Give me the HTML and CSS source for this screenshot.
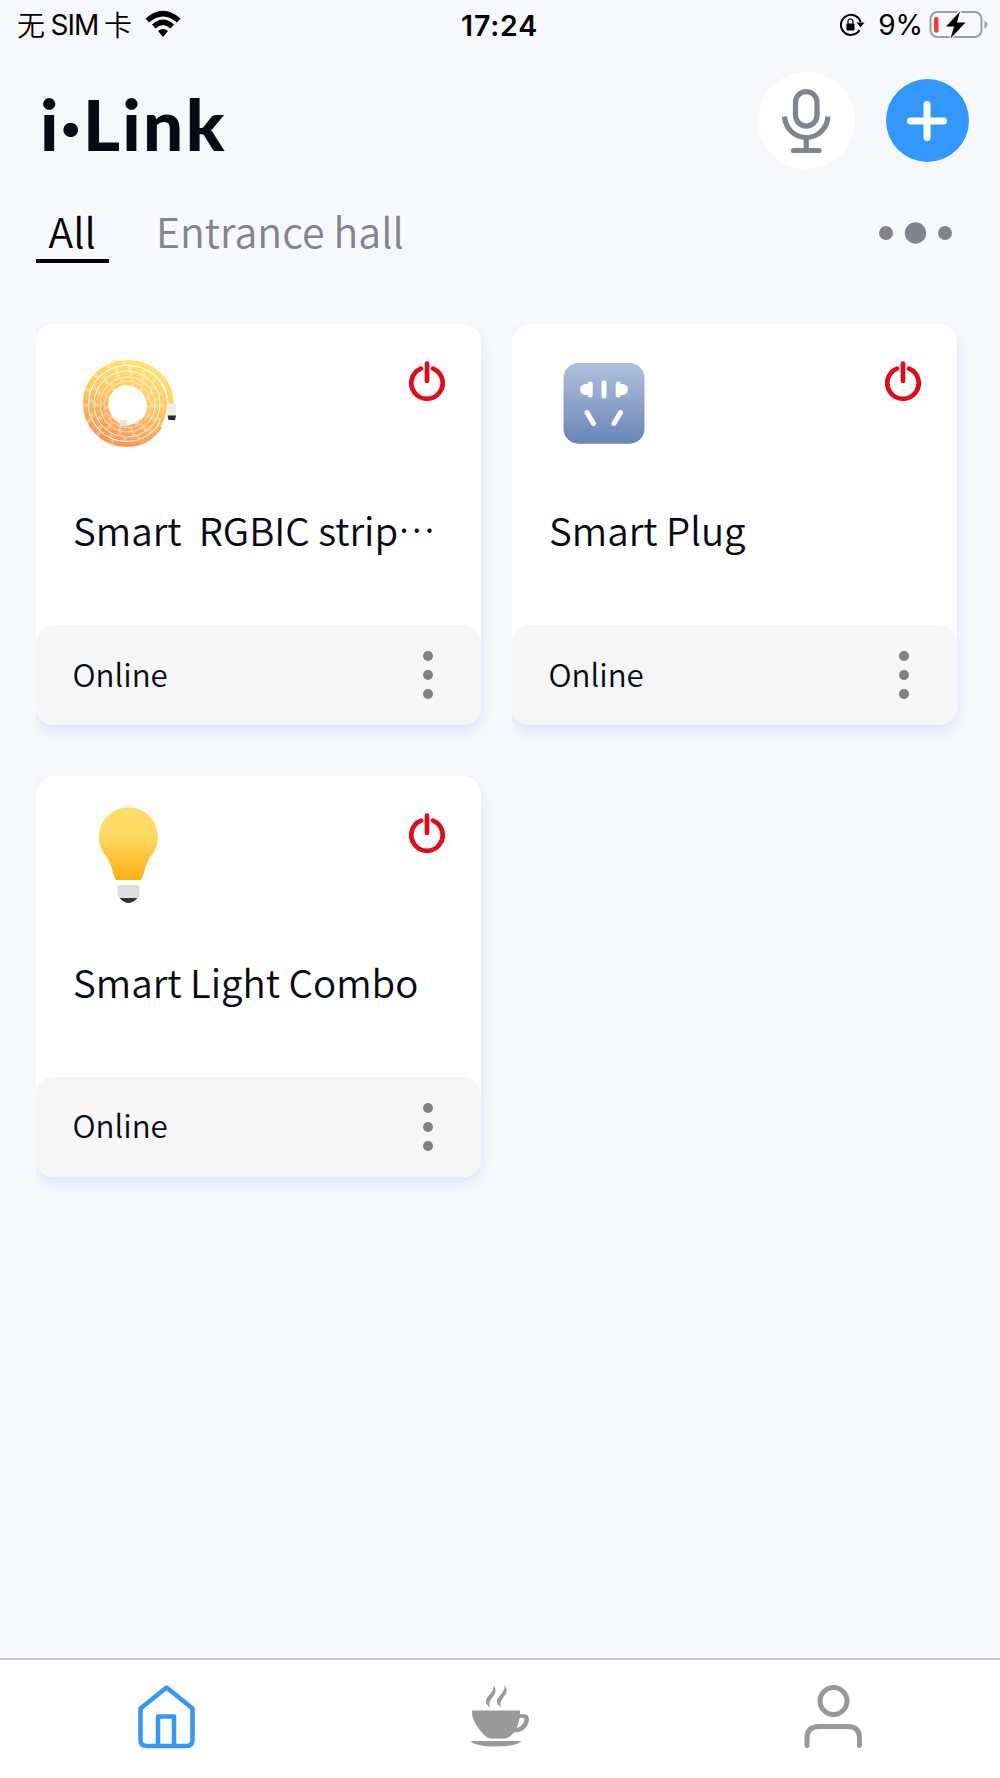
FILE: index.html
```
<!DOCTYPE html>
<html lang="en">
<head>
<meta charset="UTF-8">
<meta name="viewport" content="width=device-width, initial-scale=1.0">
<title>i·Link</title>
<link rel="stylesheet" href="styles.css">
</head>
<body>
  <div class="status-bar">
    <div class="status-left">
      <span class="carrier"><span class="han">无</span><span class="sim">SIM</span><span class="han">卡</span></span>
      <svg class="wifi" width="36" height="28" viewBox="0 0 35 28">
        <path d="M0 8.500Q17.500 -7 35 8.500L31.500 12.500Q17.500 .500 3.500 12.500Z"/>
        <path d="M6.500 14.500Q17.500 4.500 28.500 14.500L25 18.500Q17.500 11.500 10 18.500Z"/>
        <path d="M12.500 21Q17.500 17 22.500 21L17.500 27Z"/>
      </svg>
    </div>
    <div class="time">17:24</div>
    <div class="status-right">
      <svg width="26" height="26" viewBox="0 0 26 26">
        <path d="M20.500 18A10 10 0 1 1 21.500 10" fill="none" stroke="#000" stroke-width="2"/>
        <path d="M17.500 10.500H25.500L21.500 15.500Z"/>
        <rect x="7.500" y="11.500" width="8" height="7" rx="1"/>
        <path d="M9 12V9.500a2.500 2.500 0 0 1 5 0V12" fill="none" stroke="#000" stroke-width="1.200"/>
      </svg>
      <span class="percent">9%</span>
      <svg width="60" height="30" viewBox="0 0 60 30">
        <rect x="1.500" y="2" width="51" height="25" rx="7" fill="none" stroke="#9d9ea2" stroke-width="2"/>
        <path d="M55.500 10.500Q61 14.500 55.500 19Z" fill="#9d9ea2"/>
        <rect x="5" y="7" width="4.500" height="15.500" rx="1.500" fill="#ff3b30"/>
        <path d="M31 1.500L17 16.500H25L21.500 28.500L36.500 12.500H28Z" stroke="#f7f8fc" stroke-width="3" paint-order="stroke"/>
      </svg>
    </div>
  </div>

  <header class="header">
    <h1 class="logo">i·Link</h1>
    <button class="mic-btn">
      <svg width="50" height="66" viewBox="0 0 50 66" fill="none" stroke="#80848d" stroke-width="5.200">
        <rect x="13.500" y="3.600" width="21.500" height="34.500" rx="10.750"/>
        <path d="M2.500 28.500C3.500 40.500 12.500 49.500 24.250 49.500S45 40.500 46 28.500"/>
        <path d="M24.250 50V62"/>
        <path d="M11.500 62.500H37" stroke-linecap="round"/>
      </svg>
    </button>
    <button class="add-btn">
      <svg width="42" height="42" viewBox="0 0 42 42" stroke="#fff" stroke-width="7" stroke-linecap="round">
        <path d="M21 4.500V37.500M4.500 21H37.500"/>
      </svg>
    </button>
  </header>

  <nav class="tabs">
    <a class="tab active">All</a>
    <a class="tab">Entrance hall</a>
    <svg class="more" width="74" height="22" viewBox="0 0 74 22" fill="#80848d">
      <circle cx="7" cy="11" r="7"/>
      <circle cx="36.500" cy="11" r="10.700"/>
      <circle cx="66" cy="11" r="7"/>
    </svg>
  </nav>

  <main class="devices">
    <div class="card">
      <div class="card-top">
        <div class="card-icons">
          <svg width="100" height="100" viewBox="0 0 100 100" fill="none">
            <defs>
              <linearGradient id="strip" gradientUnits="userSpaceOnUse" x1="62" y1="10" x2="32" y2="92">
                <stop offset="0" stop-color="#ffe271"/>
                <stop offset=".4" stop-color="#ffca63"/>
                <stop offset="1" stop-color="#ff904c"/>
              </linearGradient>
            </defs>
            <circle cx="49" cy="51" r="29.500" stroke="url(#strip)" stroke-width="21.500"/>
            <path d="M93 51C93 26 73 9.500 48.500 9.500A41 41 0 0 0 48.500 91.500C63 91.500 74 85 82 73" stroke="url(#strip)" stroke-width="5.200"/>
            <path d="M90 51C88 26 70 12.500 48.500 12.500A38 38 0 0 0 48.500 88.500C63 88.500 75 81 82 69" stroke="#fff" stroke-width="1.200"/>
            <circle cx="49" cy="51" r="33" stroke="#fff" stroke-width="1"/>
            <circle cx="49.500" cy="51.500" r="27.500" stroke="#fff" stroke-width=".8"/>
            <circle cx="49.500" cy="51.500" r="23" stroke="#fff" stroke-width=".6" stroke-dasharray="5 1"/>
            <g stroke="#fff" stroke-opacity=".28">
              <path d="M48.500 9.500A41 41 0 0 0 48.500 91.500" stroke-width="5" stroke-dasharray="4 12"/>
              <circle cx="49" cy="51" r="35.500" stroke-width="4" stroke-dasharray="4 10"/>
              <circle cx="49" cy="51" r="30" stroke-width="4" stroke-dasharray="4 9"/>
              <circle cx="49" cy="51.500" r="25" stroke-width="4" stroke-dasharray="3 8"/>
              <circle cx="49.500" cy="52" r="20.500" stroke-width="3" stroke-dasharray="3 7"/>
            </g>
            <circle cx="50" cy="53" r="19" fill="#fff"/>
            <rect x="42" y="67" width="7.500" height="6" rx="1" fill="#e5e5e5"/>
            <rect x="89" y="50.500" width="9" height="13" rx="2" fill="#eee"/>
            <path d="M89.500 62.500H98L97 67H90.500Z" fill="#2b2b2b"/>
          </svg>
          <svg class="power" width="36" height="41" viewBox="0 0 36 41"><use href="#power"/></svg>
        </div>
        <h2 class="name">Smart&nbsp; RGBIC strip<span class="dots">…</span></h2>
      </div>
      <div class="card-bottom">
        <span class="status">Online</span>
        <svg width="10" height="48" viewBox="0 0 10 48"><use href="#kebab"/></svg>
      </div>
    </div>

    <div class="card">
      <div class="card-top">
        <div class="card-icons">
          <svg width="100" height="100" viewBox="0 0 100 100">
            <defs>
              <linearGradient id="plug" x1="0" y1="0" x2="0" y2="1">
                <stop offset="0" stop-color="#b1c1df"/>
                <stop offset="1" stop-color="#6985b7"/>
              </linearGradient>
            </defs>
            <rect x="9.500" y="10" width="81" height="80.700" rx="15" fill="url(#plug)"/>
            <g stroke="#fff" stroke-width="5" stroke-linecap="round">
              <path d="M50 30V43"/>
              <path d="M36.200 31V42M64.200 31V42"/>
              <path d="M33 59.500L39.500 70.500M66.500 59.500L60 70.500"/>
            </g>
            <path d="M38 31H31.500a5.500 5.500 0 0 0 0 11H38ZM62.500 31H68.500a5.500 5.500 0 0 1 0 11H62.500Z" fill="#fff"/>
          </svg>
          <svg class="power" width="36" height="41" viewBox="0 0 36 41"><use href="#power"/></svg>
        </div>
        <h2 class="name">Smart Plug</h2>
      </div>
      <div class="card-bottom">
        <span class="status">Online</span>
        <svg width="10" height="48" viewBox="0 0 10 48"><use href="#kebab"/></svg>
      </div>
    </div>

    <div class="card">
      <div class="card-top">
        <div class="card-icons">
          <svg width="100" height="100" viewBox="0 0 100 100">
            <defs>
              <linearGradient id="bulb" x1="0" y1="0" x2="0" y2="1">
                <stop offset=".35" stop-color="#ffdc67"/>
                <stop offset="1" stop-color="#ffb012"/>
              </linearGradient>
            </defs>
            <path d="M50.500 2.500C34 2.500 21 15.500 21 32C21 40 24 46 28 51C33 57 34 66 37 73C37.500 74.500 38 75 39 75H62C63 75 63.500 74.500 64 73C67 66 68 57 73 51C77 46 80 40 80 32C80 15.500 67 2.500 50.500 2.500Z" fill="url(#bulb)"/>
            <path d="M41.500 80H59.500Q61.500 80 61.500 82V89Q61.500 93 58.500 93H42.500Q39.500 93 39.500 89V82Q39.500 80 41.500 80Z" fill="#dedede"/>
            <path d="M41.500 93H59.500Q55 98 50.500 98T41.500 93Z" fill="#333"/>
          </svg>
          <svg class="power" width="36" height="41" viewBox="0 0 36 41"><use href="#power"/></svg>
        </div>
        <h2 class="name">Smart Light Combo</h2>
      </div>
      <div class="card-bottom">
        <span class="status">Online</span>
        <svg width="10" height="48" viewBox="0 0 10 48"><use href="#kebab"/></svg>
      </div>
    </div>
  </main>

  <footer class="nav">
    <a class="nav-item">
      <svg width="58" height="66" viewBox="0 0 58 66" fill="none" stroke="#3298ff" stroke-width="4.500" stroke-linejoin="round">
        <path d="M2.500 24.500L28.500 3.500L54.500 24.500V56Q54.500 62 48.500 62H8.500Q2.500 62 2.500 56Z"/>
        <path d="M20 62V32.500H36V62"/>
      </svg>
    </a>
    <a class="nav-item">
      <svg width="58" height="66" viewBox="0 0 58 66" fill="#999">
        <path d="M1 26.500H49V30.200H53C57 30.200 58 33 58 36C57 44 51 48.500 43 48.500C40 51 38 54.500 34 54.500H20C15 54.500 10 48 6 42C2.500 36.500 1 33 1 26.500ZM48.500 34Q48 39.500 45.500 44C50 43 53.500 39 53.500 34.500Q52 33.500 48.500 34Z" fill-rule="evenodd"/>
        <path d="M0 57H50C48.500 60.500 38 62.500 25 62.500S1.500 60.500 0 57Z"/>
        <path d="M22.500 1C30 11 15 14 19 23.500C7 15 25 10 22.500 1ZM33.500 1C41 11 26 14 30 23.500C18 15 36 10 33.500 1Z"/>
      </svg>
    </a>
    <a class="nav-item">
      <svg width="58" height="66" viewBox="0 0 58 66" fill="none" stroke="#999" stroke-width="5">
        <circle cx="29.500" cy="17" r="13.500"/>
        <path d="M3 61.500V54Q3 42.500 15 42.500H43.500Q55.500 42.500 55.500 54V61.500" stroke-linecap="round"/>
      </svg>
    </a>
  </footer>

  <!-- shared icons -->
  <svg class="symbols" width="0" height="0">
    <symbol id="power" viewBox="0 0 36 41">
      <path d="M12 7.600A15.700 15.700 0 1 0 24 7.600M18 2.500V20" fill="none" stroke="#e00b1b" stroke-width="4.700" stroke-linecap="round"/>
    </symbol>
    <symbol id="kebab" viewBox="0 0 10 48">
      <circle cx="5" cy="5" r="5"/>
      <circle cx="5" cy="24" r="5"/>
      <circle cx="5" cy="43" r="5"/>
    </symbol>
  </svg>
</body>
</html>
```

FILE: styles.css
```
* {
  box-sizing: border-box;
}
body {
  margin: 0;
  height: 1778px;
  display: flex;
  flex-direction: column;
  position: relative;
  overflow: hidden;
  background-color: #f7f8fc;
  color: #050a14;
  font-family: "Noto Sans CJK SC", sans-serif;
}
svg {
  display: block;
  flex-shrink: 0;
}
button {
  border: none;
  padding: 0;
  display: flex;
  align-items: center;
  justify-content: center;
  border-radius: 50%;
}

/* status bar */
.status-bar {
  display: grid;
  grid-template-columns: 1fr auto 1fr;
  align-items: center;
  height: 50px;
  padding: 0 11px 0 17px;
  color: #000;
  font-family: Inter, "Noto Sans CJK SC", sans-serif;
  font-size: 28px;
}
.status-left,
.status-right {
  display: flex;
  align-items: center;
}
.status-right {
  justify-content: flex-end;
}
.carrier {
  display: flex;
  align-items: center;
  justify-content: space-between;
  width: 115px;
  margin-right: 13px;
}
.han {
  font-family: "Noto Sans CJK SC", sans-serif;
  font-weight: 350;
  font-size: 28px;
  line-height: 34px;
  padding-bottom: 2px;
}
.sim {
  letter-spacing: -1px;
}
.wifi {
  margin-bottom: 2px;
}
.time {
  padding-right: 7px;
  font-size: 28.5px;
  font-weight: 600;
  letter-spacing: 0.8px;
}
.percent {
  margin: 0 6px 0 13px;
}

/* header */
.header {
  display: flex;
  align-items: center;
  height: 129px;
  margin-top: 6px;
  padding: 0 31.5px 0 40px;
}
.logo {
  margin: 5px auto 0 0;
  font-family: Lato, sans-serif;
  font-size: 71px;
  line-height: 71px;
  font-weight: 900;
  letter-spacing: 2.3px;
}
.mic-btn {
  width: 97px;
  height: 97px;
  margin-right: 30.5px;
  background-color: #fff;
}
.add-btn {
  width: 83px;
  height: 83px;
  background-color: #3298ff;
}

/* room tabs */
.tabs {
  display: flex;
  height: 78px;
  padding: 16px 47px 0 36px;
}
.tab {
  height: 62px;
  padding: 0 12.5px;
  margin-right: 35px;
  font-size: 41px;
  line-height: 59px;
  font-weight: 350;
  color: #80848d;
  border-bottom: 4.5px solid transparent;
}
.tab.active {
  color: #000;
  border-color: #000;
}
.more {
  margin: 20.5px 0 0 auto;
}

/* device cards */
.devices {
  display: grid;
  grid-template-columns: 445px 445px;
  gap: 50.5px 31px;
  margin: 61px 0 0 36px;
}
.card {
  height: 401px;
  border-radius: 18px;
  background-color: #fff;
  box-shadow: 0 6px 14px rgba(50, 110, 240, 0.14);
  clip-path: inset(0 -24px -24px 0);
}
.card-top {
  height: 301px;
  padding: 29px 36px 0 37px;
}
.card-icons {
  display: flex;
  justify-content: space-between;
  padding-left: 5px;
}
.power {
  margin-top: 8px;
}
.name {
  margin: 47px 0 0;
  font-size: 38.5px;
  line-height: 58px;
  font-weight: 350;
  white-space: nowrap;
}
/* ellipsis sits at mid height */
.dots {
  font-size: 34px;
  line-height: 0;
  vertical-align: 13px;
}
.card-bottom {
  display: flex;
  align-items: center;
  justify-content: space-between;
  height: 100px;
  padding: 0 48.5px 0 36.5px;
  border-radius: 18px;
  background-color: #f6f6f6;
  fill: #808080;
}
.status {
  padding-bottom: 4px;
  font-size: 31.3px;
  font-weight: 350;
}

/* bottom navigation */
.nav {
  display: grid;
  grid-template-columns: repeat(3, 1fr);
  height: 120px;
  margin-top: auto;
  padding-top: 24px;
  border-top: 2px solid #c8c9cc;
  background-color: #fff;
}
.nav-item {
  display: flex;
  justify-content: center;
}
.symbols {
  position: absolute;
}
```
